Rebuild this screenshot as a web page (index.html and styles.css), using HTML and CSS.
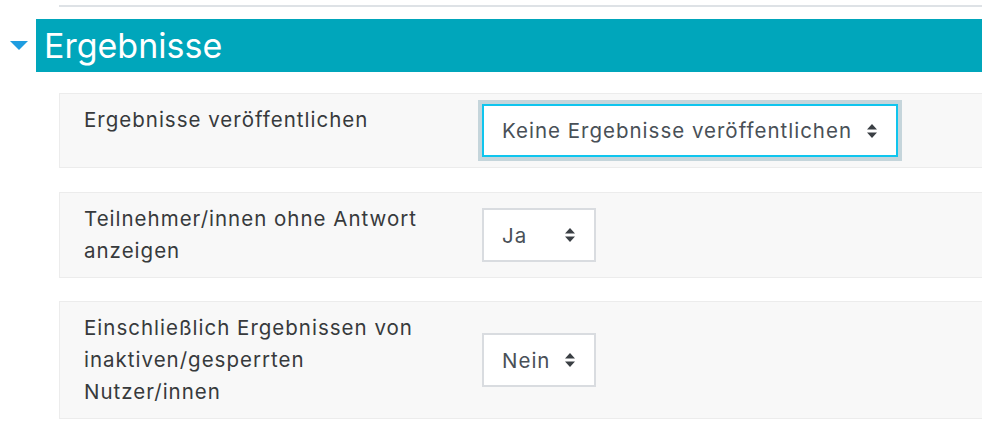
FILE: index.html
```html
<!DOCTYPE html>
<html>
<head>
<meta charset="utf-8">
<link rel="stylesheet" href="styles.css">
</head>
<body>
    <div class="topline"></div>
    <div class="section-head">
        <svg class="caret" width="18" height="10" viewBox="0 0 18 10"><path d="M0 0 L18 0 L9 9 Z" fill="#1f9de0"/></svg>
        <h2 class="section-title">Ergebnisse</h2>
    </div>
    <div class="fields">
        <div class="field">
            <div class="field-label">Ergebnisse veröffentlichen</div>
            <div class="select focused">
                <span>Keine Ergebnisse veröffentlichen</span>
                <svg class="arrows" width="10" height="14" viewBox="0 0 10 14"><path d="M5 0 L10 5.5 L0 5.5 Z M0 8.5 L10 8.5 L5 14 Z" fill="#3a3f44"/></svg>
            </div>
        </div>
        <div class="field">
            <div class="field-label">Teilnehmer/innen ohne Antwort anzeigen</div>
            <div class="select small">
                <span>Ja</span>
                <svg class="arrows" width="10" height="14" viewBox="0 0 10 14"><path d="M5 0 L10 5.5 L0 5.5 Z M0 8.5 L10 8.5 L5 14 Z" fill="#3a3f44"/></svg>
            </div>
        </div>
        <div class="field">
            <div class="field-label">Einschließlich Ergebnissen von inaktiven/gesperrten Nutzer/innen</div>
            <div class="select small">
                <span>Nein</span>
                <svg class="arrows" width="10" height="14" viewBox="0 0 10 14"><path d="M5 0 L10 5.5 L0 5.5 Z M0 8.5 L10 8.5 L5 14 Z" fill="#3a3f44"/></svg>
            </div>
        </div>
    </div>
</body>
</html>
```

FILE: styles.css
```css
body {
    margin: 0;
    overflow: hidden;
    background: #fff;
    font-family: Inter, "Noto Sans", sans-serif;
    color: #373a3c;
}

.topline {
    height: 2px;
    margin: 5px -20px 0 59px;
    background: #dee2e6;
}

.section-head {
    display: flex;
    align-items: center;
    margin-top: 12px;
}

.caret {
    margin: 0 8px 0 10px;
    flex: none;
}

.section-title {
    flex: 1;
    margin: 0 -20px 0 0;
    height: 53px;
    line-height: 53px;
    padding-left: 8px;
    background: #00a6bb;
    color: #fff;
    font-size: 34px;
    font-weight: 400;
}

.fields {
    margin: 21px -20px 0 59px;
}

.field {
    display: flex;
    align-items: center;
    min-height: 53px;
    padding: 10px 0 10px 24px;
    margin-bottom: 23px;
    background: #f8f8f8;
    border: 1px solid #ececec;
}

.field:first-child {
    margin-bottom: 24px;
}

.field-label {
    align-self: flex-start;
    width: 350px;
    margin-right: 48px;
    font-size: 20.5px;
    letter-spacing: 1px;
    line-height: 32px;
}

.select {
    display: flex;
    align-items: center;
    justify-content: space-between;
    box-sizing: border-box;
    height: 54px;
    padding: 0 19px 0 18px;
    background: #fff;
    border: 2px solid #d9dce0;
    color: #495057;
    font-size: 20.5px;
    letter-spacing: 1px;
}

.select.focused {
    width: 416px;
    height: 53px;
    border-color: #0fc5ee;
    box-shadow: 0 0 0 4px #c5d5db;
}

.select.small {
    width: 114px;
}

.arrows {
    flex: none;
}
```
